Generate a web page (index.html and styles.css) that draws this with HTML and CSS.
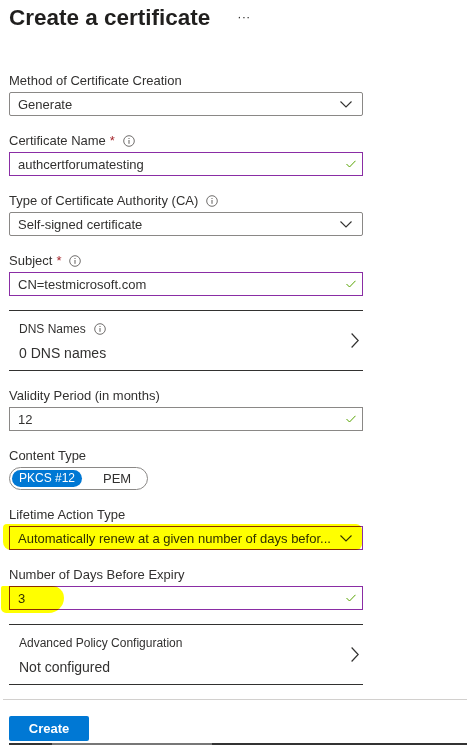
FILE: index.html
```html
<!DOCTYPE html>
<html lang="en">
<head>
<meta charset="utf-8">
<title>Create a certificate</title>
<link rel="stylesheet" href="styles.css">
</head>
<body>
<div class="page">
  <header class="header">
    <h1 class="title">Create a certificate</h1>
    <span class="more">···</span>
  </header>

  <div class="form">
    <div class="field">
      <div class="label">Method of Certificate Creation</div>
      <div class="box select">
        <span class="value">Generate</span>
        <svg class="chev" width="12" height="7" viewBox="0 0 12 7"><path d="M0.5 0.5 L6 6 L11.5 0.5" fill="none" stroke="#323130" stroke-width="1.1"/></svg>
      </div>
    </div>

    <div class="field">
      <div class="label">Certificate Name <span class="req">*</span>
        <svg class="info" width="12" height="12" viewBox="0 0 12 12"><circle cx="6" cy="6" r="5.3" fill="none" stroke="#605e5c" stroke-width="0.9"/><rect x="5.5" y="5" width="1" height="3.8" fill="#605e5c"/><rect x="5.5" y="3" width="1" height="1" fill="#605e5c"/></svg>
      </div>
      <div class="box valid">
        <span class="value">authcertforumatesting</span>
        <svg class="check" width="10" height="8" viewBox="0 0 10 8"><path d="M0.5 4 L3.5 7 L9.5 0.8" fill="none" stroke="#57a300" stroke-width="1"/></svg>
      </div>
    </div>

    <div class="field">
      <div class="label">Type of Certificate Authority (CA)
        <svg class="info" width="12" height="12" viewBox="0 0 12 12"><circle cx="6" cy="6" r="5.3" fill="none" stroke="#605e5c" stroke-width="0.9"/><rect x="5.5" y="5" width="1" height="3.8" fill="#605e5c"/><rect x="5.5" y="3" width="1" height="1" fill="#605e5c"/></svg>
      </div>
      <div class="box select">
        <span class="value">Self-signed certificate</span>
        <svg class="chev" width="12" height="7" viewBox="0 0 12 7"><path d="M0.5 0.5 L6 6 L11.5 0.5" fill="none" stroke="#323130" stroke-width="1.1"/></svg>
      </div>
    </div>

    <div class="field">
      <div class="label">Subject <span class="req">*</span>
        <svg class="info" width="12" height="12" viewBox="0 0 12 12"><circle cx="6" cy="6" r="5.3" fill="none" stroke="#605e5c" stroke-width="0.9"/><rect x="5.5" y="5" width="1" height="3.8" fill="#605e5c"/><rect x="5.5" y="3" width="1" height="1" fill="#605e5c"/></svg>
      </div>
      <div class="box valid">
        <span class="value">CN=testmicrosoft.com</span>
        <svg class="check" width="10" height="8" viewBox="0 0 10 8"><path d="M0.5 4 L3.5 7 L9.5 0.8" fill="none" stroke="#57a300" stroke-width="1"/></svg>
      </div>
    </div>

    <div class="nav-row nav-dns">
      <div class="nav-text">
        <div class="nav-label">DNS Names
          <svg class="info" width="12" height="12" viewBox="0 0 12 12"><circle cx="6" cy="6" r="5.3" fill="none" stroke="#605e5c" stroke-width="0.9"/><rect x="5.5" y="5" width="1" height="3.8" fill="#605e5c"/><rect x="5.5" y="3" width="1" height="1" fill="#605e5c"/></svg>
        </div>
        <div class="nav-value">0 DNS names</div>
      </div>
      <svg class="nav-chev" width="8" height="15" viewBox="0 0 8 15"><path d="M0.6 0.5 L7.2 7.5 L0.6 14.5" fill="none" stroke="#323130" stroke-width="1.2"/></svg>
    </div>

    <div class="field">
      <div class="label">Validity Period (in months)</div>
      <div class="box plain">
        <span class="value">12</span>
        <svg class="check" width="10" height="8" viewBox="0 0 10 8"><path d="M0.5 4 L3.5 7 L9.5 0.8" fill="none" stroke="#57a300" stroke-width="1"/></svg>
      </div>
    </div>

    <div class="field">
      <div class="label">Content Type</div>
      <div class="toggle">
        <span class="opt on">PKCS #12</span>
        <span class="opt">PEM</span>
      </div>
    </div>

    <div class="field">
      <div class="label">Lifetime Action Type</div>
      <div class="box valid select hl-wrap">
        <span class="value">Automatically renew at a given number of days befor...</span>
        <svg class="chev" width="12" height="7" viewBox="0 0 12 7"><path d="M0.5 0.5 L6 6 L11.5 0.5" fill="none" stroke="#323130" stroke-width="1.1"/></svg>
        <span class="marker marker-long"></span>
      </div>
    </div>

    <div class="field">
      <div class="label">Number of Days Before Expiry</div>
      <div class="box valid hl-wrap">
        <span class="value">3</span>
        <svg class="check" width="10" height="8" viewBox="0 0 10 8"><path d="M0.5 4 L3.5 7 L9.5 0.8" fill="none" stroke="#57a300" stroke-width="1"/></svg>
        <span class="marker marker-short"></span>
      </div>
    </div>

    <div class="nav-row nav-adv">
      <div class="nav-text">
        <div class="nav-label">Advanced Policy Configuration</div>
        <div class="nav-value">Not configured</div>
      </div>
      <svg class="nav-chev" width="8" height="15" viewBox="0 0 8 15"><path d="M0.6 0.5 L7.2 7.5 L0.6 14.5" fill="none" stroke="#323130" stroke-width="1.2"/></svg>
    </div>
  </div>

  <footer class="footer">
    <button class="btn-primary">Create</button>
  </footer>
  <div class="bottom-bar"><span class="seg a"></span><span class="seg b"></span><span class="seg c"></span></div>
</div>
</body>
</html>
```

FILE: styles.css
```css
* { box-sizing: border-box; }
html, body { margin: 0; padding: 0; background: #fff; }
body {
  font-family: "Liberation Sans", Arial, sans-serif;
  color: #323130;
  width: 467px;
  height: 745px;
  overflow: hidden;
}
.page {
  position: relative;
  height: 745px;
  display: flex;
  flex-direction: column;
}
.header {
  display: flex;
  align-items: center;
  padding: 2px 0 0 9px;
  height: 34px;
}
.title {
  margin: 0;
  font-size: 22.5px;
  font-weight: 700;
  color: #201f1e;
  letter-spacing: 0;
}
.more {
  margin-left: 27px;
  font-size: 13px;
  color: #323130;
  letter-spacing: 0;
  position: relative;
  top: -2px;
}
.form {
  padding: 36px 0 0 9px;
  width: 363px;
}
.field { margin-bottom: 14px; }
.label {
  font-size: 13px;
  line-height: 20px;
  height: 20px;
  padding-top: 1px;
  margin-bottom: 2px;
  display: flex;
  align-items: center;
  white-space: nowrap;
}
.req { color: #a4262c; margin-left: 4px; }
.info { margin-left: 8px; }
.box {
  position: relative;
  height: 24px;
  border: 1px solid #8a8886;
  border-radius: 2px;
  display: flex;
  align-items: center;
  padding: 0 9px 0 8px;
  font-size: 13px;
  background: #fff;
}
.box.valid { border-color: #8a2da5; border-radius: 0; }
.box.plain { border-color: #8a8886; border-radius: 0; }
.value { flex: 1; white-space: nowrap; overflow: hidden; }
.chev { margin-right: 1px; }
.check { margin-right: -3px; }
.nav-row {
  border-top: 1px solid #323130;
  border-bottom: 1px solid #323130;
  height: 61px;
  display: flex;
  align-items: center;
  padding: 0 4px 0 10px;
  margin-bottom: 14px;
}
.nav-text { flex: 1; }
.nav-label {
  font-size: 12px;
  display: flex;
  align-items: center;
  height: 18px;
}
.nav-value {
  font-size: 14px;
  margin-top: 7px;
}
.toggle {
  width: 139px;
  height: 23px;
  border: 1px solid #8a8886;
  border-radius: 12px;
  display: flex;
  align-items: center;
  padding: 0 2px;
}
.opt {
  font-size: 13px;
  height: 17px;
  line-height: 17px;
  border-radius: 9px;
  padding: 0 7px;
  color: #323130;
  white-space: nowrap;
}
.opt.on {
  background: #0078d4;
  color: #fff;
  font-size: 12px;
  flex: 0 0 70px;
  width: 70px;
  padding: 0;
  text-align: center;
  margin-right: 14px;
}
.hl-wrap { overflow: visible; }
.marker {
  position: absolute;
  background: #ffff00;
  mix-blend-mode: multiply;
  pointer-events: none;
}
.marker-long {
  left: -7px;
  right: 0;
  top: -3px;
  bottom: -1px;
  border-radius: 4px 6px 6px 8px;
}
.marker-short {
  left: -9px;
  width: 63px;
  top: -1px;
  bottom: -4px;
  border-radius: 2px 14px 18px 6px;
}
.nav-adv { margin-top: 1px; }
.footer {
  margin-left: 3px;
  border-top: 1px solid #d2d0ce;
  padding: 16px 0 0 6px;
}
.btn-primary {
  width: 80px;
  height: 25px;
  background: #0078d4;
  color: #fff;
  border: none;
  border-radius: 2px;
  font-family: "Liberation Sans", Arial, sans-serif;
  font-size: 13px;
  font-weight: 700;
  padding: 0;
}
.bottom-bar {
  position: absolute;
  left: 9px;
  right: 0;
  bottom: 0;
  height: 2px;
  display: flex;
}
.seg.a { width: 43px; background: #333; }
.seg.b { width: 160px; background: #777; }
.seg.c { flex: 1; background: #333; }
```
